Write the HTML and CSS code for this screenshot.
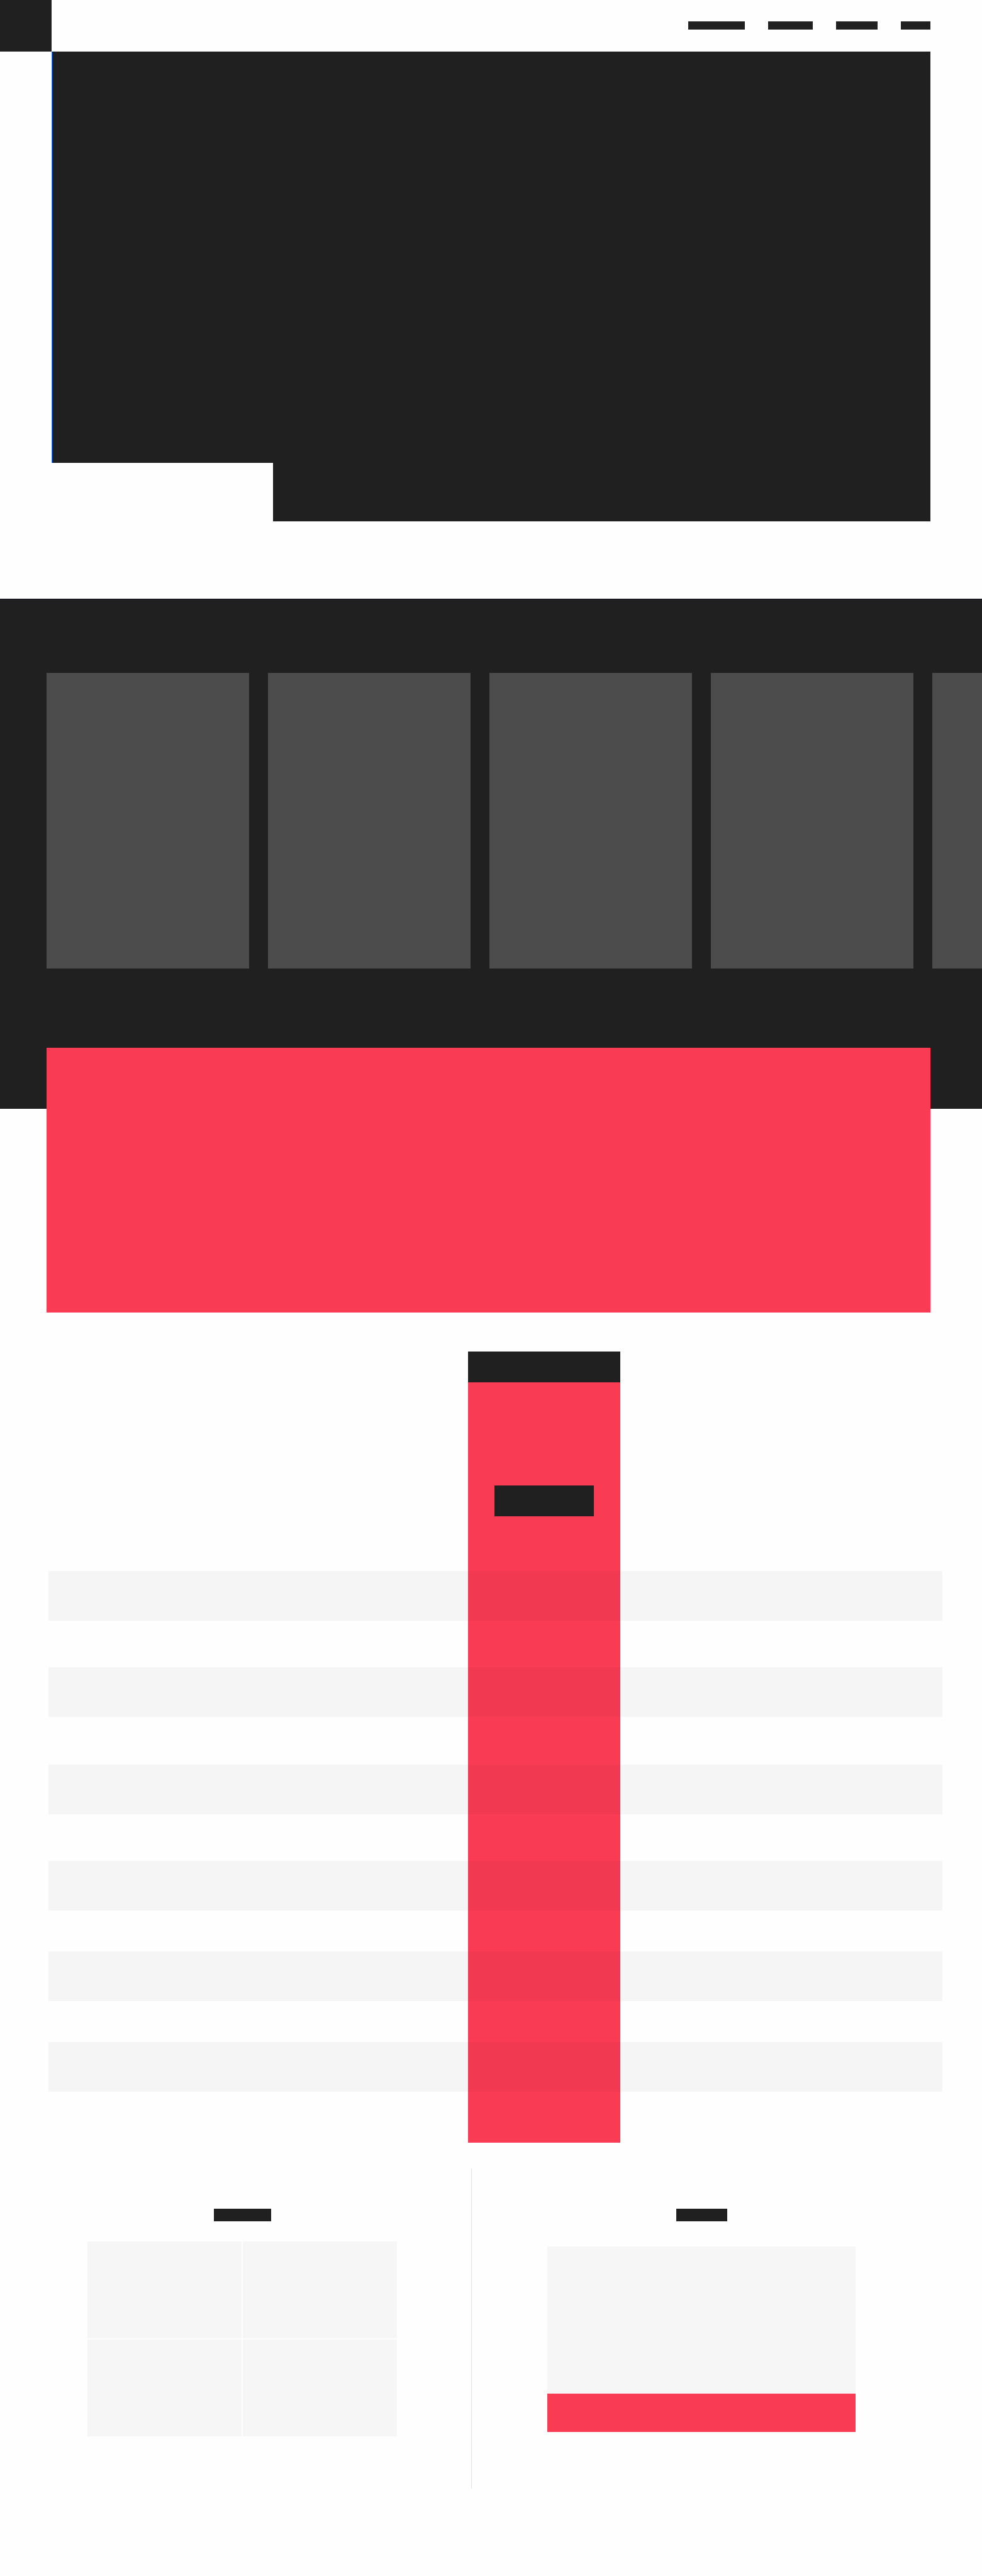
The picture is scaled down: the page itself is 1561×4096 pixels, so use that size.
FILE: index.html
```html
<!DOCTYPE html>
<html lang="en">
<head>
<meta charset="utf-8">
<meta name="viewport" content="width=device-width, initial-scale=1">
<title>Landing page wireframe</title>
<link rel="stylesheet" href="styles.css">
</head>
<body>
<header class="header">
  <a class="logo" href="#" aria-label="Home"></a>
  <nav class="nav" aria-label="Main">
    <a class="nav-link nav-link-xl" href="#cards" aria-label="Products"></a>
    <a class="nav-link nav-link-lg" href="#plans" aria-label="Plans"></a>
    <a class="nav-link nav-link-md" href="#about" aria-label="About"></a>
    <a class="nav-link nav-link-sm" href="#contact" aria-label="Contact"></a>
  </nav>
</header>
<main>
  <section class="hero">
    <div class="hero-side"></div>
    <div class="hero-main"></div>
  </section>
  <section class="band" id="cards">
    <div class="cards">
      <article class="card"></article>
      <article class="card"></article>
      <article class="card"></article>
      <article class="card"></article>
      <article class="card"></article>
    </div>
  </section>
  <section class="banner"></section>
  <section class="plans" id="plans">
    <div class="plan">
      <div class="plan-head"></div>
      <button class="plan-button" type="button" aria-label="Choose plan"></button>
    </div>
    <div class="rows">
      <div class="row"></div>
      <div class="row"></div>
      <div class="row"></div>
      <div class="row"></div>
      <div class="row"></div>
      <div class="row"></div>
    </div>
  </section>
  <section class="split">
    <div class="panel panel-tiles" id="about">
      <div class="panel-title panel-title-wide"></div>
      <div class="tiles">
        <div class="tile"></div>
        <div class="tile"></div>
        <div class="tile"></div>
        <div class="tile"></div>
      </div>
    </div>
    <div class="panel panel-form" id="contact">
      <div class="panel-title"></div>
      <form class="form">
        <textarea class="message" aria-label="Message"></textarea>
        <button class="send" type="button" aria-label="Send"></button>
      </form>
    </div>
  </section>
</main>
</body>
</html>
```
FILE: styles.css
```css
:root {
  --ink: #202020;
  --accent: #fa3b54;
  --card: #4c4c4c;
  --soft: #f6f6f6;
  --page: #fefefe;
}

* {
  box-sizing: border-box;
}

body {
  margin: 0;
  background: var(--page);
  font-family: "Liberation Sans", Arial, sans-serif;
}

button,
textarea {
  display: block;
  border: 0;
  border-radius: 0;
  padding: 0;
}

.header {
  display: flex;
  justify-content: space-between;
  height: 82px;
  padding-right: 82px;
}

.logo {
  width: 82px;
  background: var(--ink);
}

.nav {
  display: flex;
  gap: 37px;
  padding-top: 34px;
}

.nav-link {
  height: 13px;
  background: var(--ink);
}

.nav-link-xl { width: 90px; }
.nav-link-lg { width: 71px; }
.nav-link-md { width: 66px; }
.nav-link-sm { width: 47px; }

.hero {
  display: grid;
  grid-template-columns: 352fr 1045fr;
  align-items: start;
  margin: 0 82px 123px;
}

.hero-side {
  height: 654px;
  border-left: 1px solid #2680ff;
  background: var(--ink);
}

.hero-main {
  height: 747px;
  background: var(--ink);
}

.band {
  padding: 117px 0 222px 74px;
  border-top: 1px solid #101018;
  border-bottom: 1px solid #0c1216;
  background: var(--ink);
  overflow: hidden;
}

.cards {
  display: flex;
  gap: 30px;
}

.card {
  flex: none;
  width: 322px;
  height: 470px;
  background: var(--card);
}

.banner {
  position: relative;
  height: 421px;
  margin: -97px 82px 62px 74px;
  background: var(--accent);
}

.plans {
  display: grid;
  grid-template-columns: 667fr 242fr 512fr;
  margin: 0 63px 41px 77px;
}

.plan {
  grid-area: 1 / 2;
  background: var(--accent);
}

.plan-head {
  height: 49px;
  margin-bottom: 164px;
  background: var(--ink);
}

.plan-button {
  width: 158px;
  height: 49px;
  margin: 0 auto;
  background: var(--ink);
}

/* Translucent stripes tint both the page and the highlighted plan. */
.rows {
  grid-area: 1 / 1 / 2 / -1;
  z-index: 1;
  padding: 349px 0 81px;
  pointer-events: none;
}

.row {
  height: 79px;
  margin-bottom: 74px;
  background: rgba(32, 32, 32, 0.04);
}

.row:nth-child(2) { margin-bottom: 76px; }
.row:nth-child(n + 4) { margin-bottom: 65px; }
.row:last-child { margin-bottom: 0; }

.split {
  display: grid;
  grid-template-columns: 750fr 811fr;
  min-height: 509px;
  margin-bottom: 139px;
}

.panel {
  padding-top: 64px;
}

.panel-tiles {
  padding-right: 118px;
  padding-left: 139px;
  border-right: 1px solid #e2e2e2;
}

.panel-form {
  padding-right: 201px;
  padding-left: 120px;
}

.panel-title {
  width: 81px;
  height: 20px;
  margin: 0 auto 40px;
  background: var(--ink);
}

.panel-title-wide {
  width: 91px;
  margin-bottom: 32px;
}

.tiles {
  display: grid;
  grid-template-columns: 1fr 1fr;
  gap: 2px;
}

.tile {
  height: 154px;
  background: var(--soft);
}

.message {
  width: 100%;
  height: 234px;
  background: var(--soft);
  resize: none;
}

.send {
  width: 100%;
  height: 61px;
  background: var(--accent);
}
```
